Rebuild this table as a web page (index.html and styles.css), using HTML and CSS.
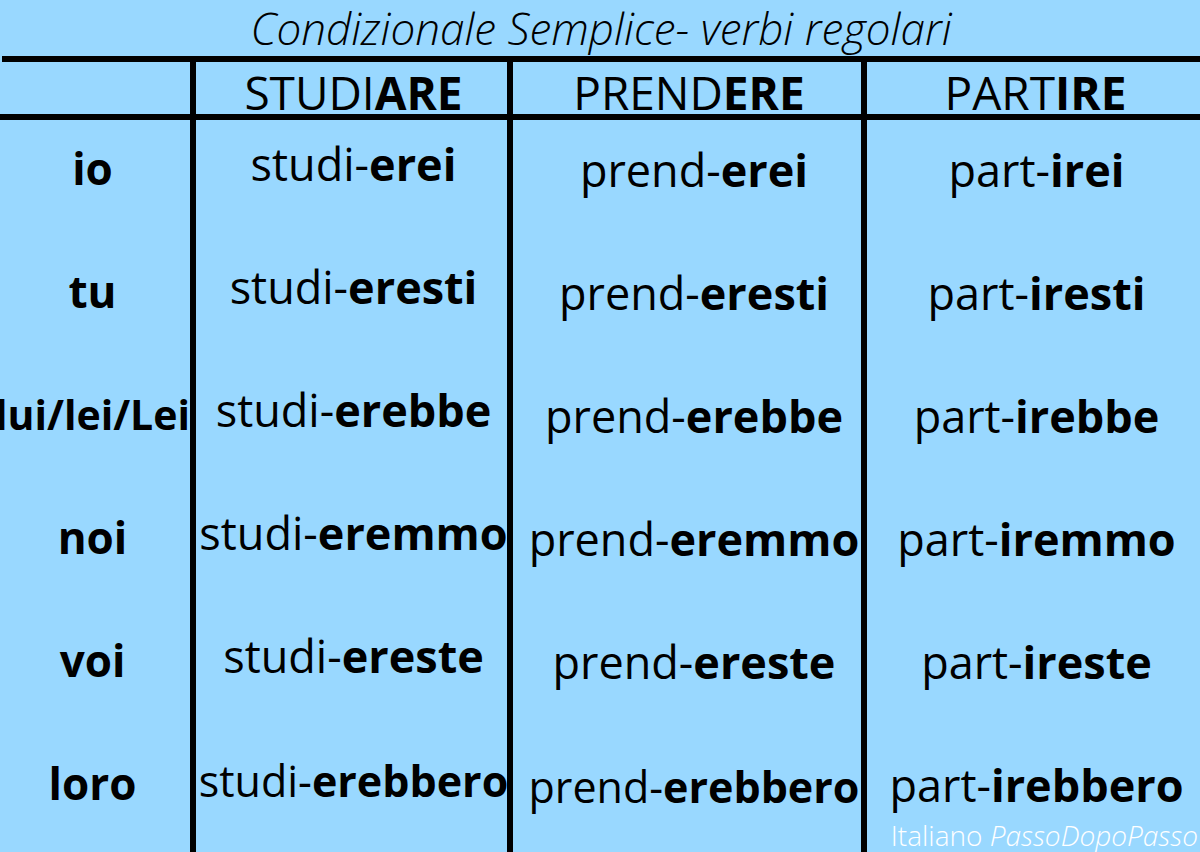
FILE: index.html
```html
<!DOCTYPE html>
<html lang="it">
<head>
<meta charset="utf-8">
<title>Condizionale Semplice</title>
<link rel="stylesheet" href="styles.css">
</head>
<body>
<div class="page">
  <h1 class="title">Condizionale Semplice- verbi regolari</h1>
  <div class="rule"></div>
  <div class="table">
    <div class="cell head c1"></div>
    <div class="cell head c2">STUDI<b>ARE</b></div>
    <div class="cell head c3">PREND<b>ERE</b></div>
    <div class="cell head c4">PART<b>IRE</b></div>

    <div class="cell pron">io</div>
    <div class="cell c2">studi-<b>erei</b></div>
    <div class="cell c3">prend-<b>erei</b></div>
    <div class="cell c4">part-<b>irei</b></div>

    <div class="cell pron">tu</div>
    <div class="cell c2">studi-<b>eresti</b></div>
    <div class="cell c3">prend-<b>eresti</b></div>
    <div class="cell c4">part-<b>iresti</b></div>

    <div class="cell pron long">lui/lei/Lei</div>
    <div class="cell c2">studi-<b>erebbe</b></div>
    <div class="cell c3">prend-<b>erebbe</b></div>
    <div class="cell c4">part-<b>irebbe</b></div>

    <div class="cell pron">noi</div>
    <div class="cell c2">studi-<b>eremmo</b></div>
    <div class="cell c3">prend-<b>eremmo</b></div>
    <div class="cell c4">part-<b>iremmo</b></div>

    <div class="cell pron">voi</div>
    <div class="cell c2">studi-<b>ereste</b></div>
    <div class="cell c3">prend-<b>ereste</b></div>
    <div class="cell c4">part-<b>ireste</b></div>

    <div class="cell pron">loro</div>
    <div class="cell c2 sm">studi-<b>erebbero</b></div>
    <div class="cell c3 sm">prend-<b>erebbero</b></div>
    <div class="cell c4">part-<b>irebbero</b></div>
  </div>
  <div class="credit">Italiano <i>PassoDopoPasso</i></div>
</div>
</body>
</html>
```
FILE: styles.css
```css
* { box-sizing: border-box; }

html, body {
  margin: 0;
  padding: 0;
  background: #99d8ff;
}

.page {
  position: relative;
  width: 1200px;
  height: 852px;
  overflow: hidden;
  background: #99d8ff;
  font-family: "Open Sans", "Liberation Sans", sans-serif;
  color: #000;
}

.title {
  margin: 0;
  height: 56px;
  padding-left: 2px;
  text-align: center;
  font-size: 44px;
  font-weight: 300;
  font-style: italic;
  line-height: 56px;
  white-space: nowrap;
}

.rule {
  height: 6px;
  margin-left: 2px;
  background: #000;
}

.table {
  display: grid;
  grid-template-columns: 190px 317px 354px 339px;
  grid-template-rows: 58px repeat(6, 123px);
}

.cell {
  display: flex;
  justify-content: center;
  align-items: flex-start;
  white-space: nowrap;
  font-size: 45px;
  line-height: 61px;
  font-weight: 400;
}

.cell b { font-weight: 700; }

.c2, .c3, .c4 { border-left: 6px solid #000; }

.c2 { padding: 13px 0 0 4px; }
.c3 { padding: 19px 0 0 14px; }
.c4 { padding: 19px 0 0 6px; }

.sm {
  font-size: 43px;
  padding-top: 15px;
}
.c3.sm { padding-top: 21px; }

.pron {
  font-size: 44px;
  line-height: 60px;
  font-weight: 700;
  padding: 18px 5px 0 0;
}

.pron.long {
  font-size: 41px;
  padding: 18px 5px 0 0;
}

.head {
  border-bottom: 6px solid #000;
  padding-top: 9px;
  font-size: 46px;
  line-height: 43px;
}

.head.c3 { padding-left: 4px; }
.head.c4 { padding-left: 4px; }
.head.c1 { padding: 0; }

.credit {
  position: absolute;
  right: 2px;
  bottom: 0;
  color: #fff;
  font-size: 28px;
  font-weight: 300;
  line-height: 34px;
  white-space: nowrap;
}

.credit i { font-style: italic; }
```
